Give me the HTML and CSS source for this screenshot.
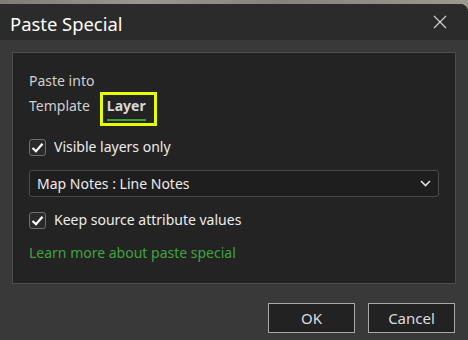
FILE: index.html
```html
<!DOCTYPE html>
<html lang="en">
<head>
	<meta charset="UTF-8">
	<title>Paste Special</title>
	<link rel="stylesheet" href="styles.css">
</head>
<body>
	<!-- dialog window -->
	<div class="dialog">
		<div class="titlebar">
			<span class="title">Paste Special</span>
			<svg class="close" width="14" height="14" viewBox="0 0 14 14">
				<path d="M1 1 L13 13 M13 1 L1 13" stroke="#d0d0d0" stroke-width="1.2" fill="none"/>
			</svg>
		</div>
		<div class="content">
			<div class="panel">
				<div class="label">Paste into</div>
				<div class="tabs">
					<span class="tab">Template</span>
					<span class="tab active"><span class="tab_text">Layer</span></span>
				</div>
				<label class="check_row first">
					<span class="box">
						<svg width="13" height="11" viewBox="0 0 13 11"><path d="M1.5 6 L5 9.2 L11.5 1.8" stroke="#fff" stroke-width="2.2" fill="none"/></svg>
					</span>
					<span>Visible layers only</span>
				</label>
				<div class="select">
					<span>Map Notes : Line Notes</span>
					<svg width="11" height="7" viewBox="0 0 11 7"><path d="M1 1 L5.5 5.5 L10 1" stroke="#e0e0e0" stroke-width="1.6" fill="none"/></svg>
				</div>
				<label class="check_row">
					<span class="box">
						<svg width="13" height="11" viewBox="0 0 13 11"><path d="M1.5 6 L5 9.2 L11.5 1.8" stroke="#fff" stroke-width="2.2" fill="none"/></svg>
					</span>
					<span>Keep source attribute values</span>
				</label>
				<a href="#" class="link">Learn more about paste special</a>
			</div>
		</div>
		<div class="footer">
			<button class="btn">OK</button>
			<button class="btn">Cancel</button>
		</div>
	</div>
</body>
</html>
```
FILE: styles.css
```css
*{
	margin: 0;
	padding: 0;
	box-sizing: border-box;
}
body{
	width: 468px;
	height: 340px;
	overflow: hidden;
	background: linear-gradient(90deg, #7e7c75, #9a978f 30%, #85837b 60%, #9b998f);
	font-family: "Noto Sans", sans-serif;
	font-size: 14px;
	color: #e6e6e6;
}
.dialog{
	margin-top: 4px;
	height: 336px;
	background: #393939;
	border-top-right-radius: 8px;
}
.titlebar{
	height: 36px;
	background: #2b2b2b;
	border-top-right-radius: 8px;
	display: flex;
	align-items: center;
	justify-content: space-between;
	padding: 0 21px 0 10px;
}
.title{
	font-size: 18.4px;
	color: #fff;
	position: relative;
	top: 1px;
}
.content{
	padding: 12px 12px 0 12px;
}
.panel{
	height: 232px;
	background: #232323;
	border: 1px solid #4e4e4e;
	padding: 18px 16px 0 16px;
	display: flex;
	flex-direction: column;
}
.label{
	font-size: 14px;
	color: #d0d0d0;
	line-height: 20px;
}
.tabs{
	display: flex;
	align-items: flex-start;
	margin-top: 1px;
	height: 34px;
}
.tab{
	font-size: 14px;
	line-height: 18px;
	margin-top: 5px;
	color: #cfcfcf;
}
.tab.active{
	margin: 0 0 0 10px;
	border: 3px solid #e5ff00;
	height: 34px;
	padding: 2px 8px 0 4px;
	display: flex;
	align-items: flex-start;
}
.tab_text{
	font-weight: bold;
	color: #d8d8d8;
	border-bottom: 2px solid #3a9e3a;
	line-height: 18px;
	padding-bottom: 4px;
}
.check_row{
	display: flex;
	align-items: center;
	gap: 8px;
	font-size: 14px;
	line-height: 18px;
	color: #ececec;
	margin-top: 14px;
}
.check_row.first{
	margin-top: 12px;
}
.box{
	width: 17px;
	height: 17px;
	border: 1px solid #6d6d6d;
	border-radius: 3px;
	background: #2a2a2a;
	display: flex;
	align-items: center;
	justify-content: center;
}
.select{
	margin-top: 14px;
	height: 27px;
	width: 410px;
	background: #1e1e1e;
	border: 1px solid #4a4a4a;
	border-radius: 3px;
	display: flex;
	align-items: center;
	justify-content: space-between;
	padding: 0 7px 0 7px;
	font-size: 14px;
	color: #ececec;
}
.link{
	margin-top: 15px;
	font-size: 14px;
	line-height: 18px;
	color: #3ea33e;
	text-decoration: none;
}
.footer{
	display: flex;
	justify-content: flex-end;
	gap: 13px;
	padding: 19px 13px 0 0;
}
.btn{
	width: 87px;
	height: 30px;
	background: #222;
	border: 1px solid #a8a8a8;
	color: #dcdcdc;
	font-family: "Noto Sans", sans-serif;
	font-size: 15px;
}
```
